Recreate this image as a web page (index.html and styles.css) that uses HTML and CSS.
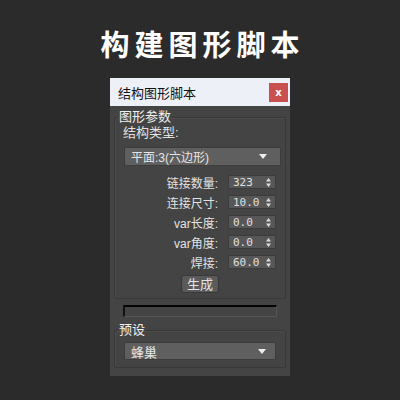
FILE: index.html
```html
<!DOCTYPE html>
<html lang="zh">
<head>
  <meta charset="UTF-8">
  <title>构建图形脚本</title>
  <link rel="stylesheet" href="styles.css">
</head>
<body>
  <h1 class="page-title">构建图形脚本</h1>

  <div class="window">
    <div class="titlebar">
      <span>结构图形脚本</span>
      <button class="close-btn">x</button>
    </div>

    <div class="window-body">
      <fieldset class="group">
        <legend>图形参数</legend>
        <div class="label">结构类型:</div>
        <div class="dropdown wide">
          <span>平面:3(六边形)</span>
          <svg width="8" height="5" viewBox="0 0 8 5"><path d="M0 0h8L4 5z" fill="#eee"/></svg>
        </div>

        <div class="spin-rows">
          <div class="spin-row"><span>链接数量:</span><div class="spinner"><span>323</span><svg width="5" height="9" viewBox="0 0 5 9"><path d="M2.5 0L5 3.5H0zM0 5.5h5L2.5 9z" fill="#ddd"/></svg></div></div>
          <div class="spin-row"><span>连接尺寸:</span><div class="spinner"><span>10.0</span><svg width="5" height="9" viewBox="0 0 5 9"><path d="M2.5 0L5 3.5H0zM0 5.5h5L2.5 9z" fill="#ddd"/></svg></div></div>
          <div class="spin-row"><span>var长度:</span><div class="spinner"><span>0.0</span><svg width="5" height="9" viewBox="0 0 5 9"><path d="M2.5 0L5 3.5H0zM0 5.5h5L2.5 9z" fill="#ddd"/></svg></div></div>
          <div class="spin-row"><span>var角度:</span><div class="spinner"><span>0.0</span><svg width="5" height="9" viewBox="0 0 5 9"><path d="M2.5 0L5 3.5H0zM0 5.5h5L2.5 9z" fill="#ddd"/></svg></div></div>
          <div class="spin-row"><span>焊接:</span><div class="spinner"><span>60.0</span><svg width="5" height="9" viewBox="0 0 5 9"><path d="M2.5 0L5 3.5H0zM0 5.5h5L2.5 9z" fill="#ddd"/></svg></div></div>
        </div>

        <button class="gen-btn">生成</button>
      </fieldset>

      <div class="progress"></div>

      <fieldset class="group preset">
        <legend>预设</legend>
        <div class="dropdown">
          <span>蜂巢</span>
          <svg width="8" height="5" viewBox="0 0 8 5"><path d="M0 0h8L4 5z" fill="#eee"/></svg>
        </div>
      </fieldset>
    </div>
  </div>
</body>
</html>
```

FILE: styles.css
```css
* {
  margin: 0;
  padding: 0;
  box-sizing: border-box;
}

body {
  width: 400px;
  height: 400px;
  background: #2b2b2b;
  color: #e2e2e2;
  font-family: "Liberation Sans", "Noto Sans CJK SC", sans-serif;
  overflow: hidden;
}

.page-title {
  padding-top: 28px;
  padding-left: 5px;
  font-family: "Noto Sans CJK SC", sans-serif;
  font-size: 29px;
  line-height: 30px;
  font-weight: bold;
  letter-spacing: 5px;
  text-align: center;
  color: #fff;
}

.window {
  width: 180px;
  margin: 20px 0 0 110px;
  background: #444444;
}

.titlebar {
  height: 28px;
  background: #eef0f8;
  color: #111;
  font-size: 13px;
  padding-left: 8px;
  padding-right: 2px;
  display: flex;
  align-items: center;
  justify-content: space-between;
}

.close-btn {
  width: 19px;
  height: 19px;
  border: none;
  background: #c9504f;
  color: #fff;
  font-family: "DejaVu Sans", sans-serif;
  font-size: 10px;
  font-weight: bold;
  line-height: 19px;
}

.window-body {
  padding: 4px 4px 8px;
}

.group {
  border: 1px solid #383838;
  border-radius: 2px;
  padding: 0 0 5px;
  box-shadow: inset 1px 1px 0 #4c4c4c;
}

.group legend {
  font-size: 13px;
  line-height: 14px;
  margin-left: 3px;
  padding: 0 1px;
  color: #f0f0f0;
}

.label {
  font-size: 13px;
  line-height: 14px;
  margin: 2px 0 0 8px;
}

.dropdown {
  height: 19px;
  margin: 7px 9px 0 9px;
  background: #5f5f5f;
  border: 1px solid #3c3c3c;
  display: flex;
  align-items: center;
  justify-content: space-between;
  padding: 0 9px 0 6px;
  font-size: 12px;
  color: #e6e6e6;
}

.dropdown.wide {
  margin-right: 4px;
  padding-right: 13px;
}

.spin-rows {
  margin-top: 9px;
  display: flex;
  flex-direction: column;
  gap: 6px;
  padding-right: 9px;
}

.spin-row {
  height: 14px;
  display: flex;
  justify-content: flex-end;
  align-items: center;
  gap: 10px;
  font-size: 12px;
}

.spinner {
  width: 48px;
  height: 14px;
  background: #575757;
  border: 1px solid #3c3c3c;
  display: flex;
  align-items: center;
  justify-content: space-between;
  padding: 0 4px 0 4px;
  font-family: "DejaVu Sans Mono", monospace;
  font-size: 11px;
  color: #e0e0e0;
}

.gen-btn {
  display: block;
  width: 38px;
  height: 18px;
  margin: 6px auto 0;
  background: #5a5a5a;
  border: 1px solid #383838;
  border-radius: 3px;
  color: #e4e4e4;
  font-family: inherit;
  font-size: 13px;
  line-height: 15px;
}

.progress {
  height: 12px;
  margin: 6px 9px 0;
  background: #444;
  border-top: 2px solid #050505;
  border-left: 2px solid #111;
  border-right: 1px solid #555;
  border-bottom: 1px solid #555;
}

.preset {
  margin-top: 5px;
  padding-bottom: 7px;
}

.preset legend {
  line-height: 16px;
}

.preset .dropdown {
  height: 18px;
  margin-top: 4px;
  font-size: 13px;
}
```
